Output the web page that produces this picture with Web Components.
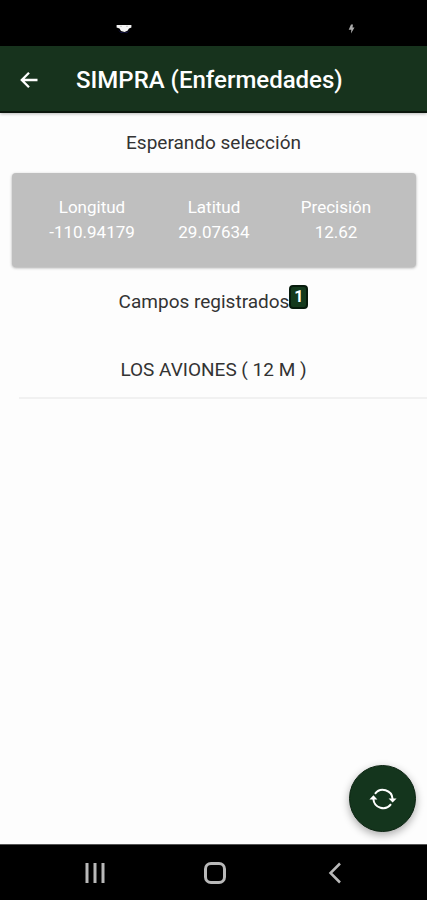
<!DOCTYPE html>
<html lang="es">
<head>
<meta charset="utf-8">
<meta name="viewport" content="width=device-width, initial-scale=1">
<title>SIMPRA (Enfermedades)</title>
<style>
html, body { margin: 0; height: 100%; }
body { font-family: Roboto, "Noto Sans", sans-serif; background: #fdfdfd; color: #333; }
</style>
</head>
<body>
<simpra-screen>
  <status-bar slot="status"></status-bar>
  <app-bar slot="header">SIMPRA (Enfermedades)</app-bar>
  <section-title>Esperando selección</section-title>
  <location-card>
    <location-value label="Longitud">-110.94179</location-value>
    <location-value label="Latitud">29.07634</location-value>
    <location-value label="Precisión">12.62</location-value>
  </location-card>
  <section-title count="1">Campos registrados</section-title>
  <field-list>
    <field-item>LOS AVIONES ( 12 M )</field-item>
  </field-list>
  <refresh-button slot="action"></refresh-button>
  <system-nav slot="nav"></system-nav>
</simpra-screen>

<script>
function define(name, markup, setup) {
  const template = document.createElement('template');
  template.innerHTML = markup;
  customElements.define(name, class extends HTMLElement {
    constructor() {
      super();
      this.attachShadow({ mode: 'open' }).append(template.content.cloneNode(true));
    }
    connectedCallback() {
      if (setup) setup(this, this.shadowRoot);
    }
  });
}

define('simpra-screen', `
<style>
:host { display: flex; flex-direction: column; min-height: 100vh; }
main { flex: 1; display: flex; flex-direction: column; position: relative; }
.action { position: absolute; right: 11px; bottom: 12px; }
</style>
<slot name="status"></slot>
<slot name="header"></slot>
<main><slot></slot><div class="action"><slot name="action"></slot></div></main>
<slot name="nav"></slot>`);

define('status-bar', `
<style>
:host { display: flex; justify-content: space-between; align-items: center; height: 46px; padding: 12px 72px 0 116px; box-sizing: border-box; background: #000; }
svg { display: block; }
</style>
<svg width="16" height="10" viewBox="0 0 16 10" aria-hidden="true"><path d="M2 6q6 5 12 0l-3 3H5z" fill="#17174a"/><path d="M.6 1h14.800v2.400l-2.400 1-1.500 2.300-3 1.200-3.500-1-1.500-2.400-2.900-1z" fill="#f4f4f4"/><path d="M4 2.300h2M10 2.300h2" stroke="#bbb" stroke-width=".8"/></svg>
<svg width="7" height="10" viewBox="0 0 7 10" aria-hidden="true"><path d="M3 .5h2l-.5 3H6.500L3 9.500l.3-3.700H.7z" fill="#aaa"/></svg>`);

define('app-bar', `
<style>
:host { display: flex; align-items: center; gap: 28px; height: 67px; padding: 2px 9px 0; box-sizing: border-box; background: #17331d; border-bottom: 2px solid #0b170d; box-shadow: 0 1px 3px #0004; color: #fff; }
button { display: grid; place-items: center; width: 39px; height: 40px; padding: 0; border: 0; background: none; color: inherit; }
h1 { margin: 0; font-size: 24px; line-height: 32px; font-weight: 500; white-space: nowrap; }
</style>
<button type="button" aria-label="Regresar"><svg width="20" height="20" viewBox="0 0 20 20" fill="none" stroke="currentColor" stroke-width="2.300"><path d="M18.500 10H3M10 2.800 2.800 10l7.200 7.200"/></svg></button>
<h1><slot></slot></h1>`);

define('section-title', `
<style>
:host { display: flex; justify-content: center; padding: 18px 0; }
h2 { margin: 0; font-size: 19px; line-height: 24px; font-weight: 400; }
.count { align-self: flex-start; width: 19px; height: 24px; border-radius: 4px; box-sizing: border-box; border: 2px solid #071b0c; background: #143a1d; color: #fff; font-size: 16px; line-height: 20px; font-weight: 700; text-align: center; }
.count[hidden] { display: none; }
:host([count]) { padding: 18px 0 28px; }
:host([count]) h2 { padding-top: 5px; }
</style>
<h2><slot></slot></h2><span class="count" hidden></span>`, (host, root) => {
  const badge = root.querySelector('.count');
  badge.textContent = host.getAttribute('count') || '';
  badge.hidden = !host.hasAttribute('count');
});

define('location-card', `
<style>
:host { display: grid; grid-template-columns: repeat(3, 1fr); margin: 0 11px 0 12px; padding: 22px 19px; border-radius: 4px; background: #bfbfbf; box-shadow: 0 1px 3px #0005; color: #fff; }
</style>
<slot></slot>`);

define('location-value', `
<style>
:host { display: flex; flex-direction: column; align-items: center; font-size: 17px; line-height: 25px; }
</style>
<span class="label"></span><span><slot></slot></span>`, (host, root) => {
  root.querySelector('.label').textContent = host.getAttribute('label');
});

define('field-list', `
<style>:host { display: block; padding-left: 19px; }</style>
<div role="list"><slot></slot></div>`);

define('field-item', `
<style>
:host { display: block; border-bottom: 2px solid #f1f1f1; }
button { display: block; width: 100%; padding: 16px 19px 15px 0; border: 0; background: none; color: inherit; font: inherit; font-size: 19px; line-height: 24px; text-align: center; }
</style>
<div role="listitem"><button type="button"><slot></slot></button></div>`);

define('refresh-button', `
<style>
:host { display: block; }
button { display: grid; place-items: center; width: 67px; height: 67px; padding: 0; border: 1px solid #0c2412; border-radius: 50%; background: #14351d; color: #fff; box-shadow: 0 3px 9px #0005; }
</style>
<button type="button" aria-label="Actualizar"><svg width="28" height="24" viewBox="0 0 28 24"><path d="M6 6.800A9.800 9.800 0 0 1 23.600 12M22 17.200A9.800 9.800 0 0 1 4.400 12" fill="none" stroke="currentColor" stroke-width="2"/><path d="M19.600 11.400h8L23.600 15.600zM.4 12.600h8L4.400 8.200z" fill="currentColor"/></svg></button>`);

define('system-nav', `
<style>
:host { display: block; background: #000; border-top: 1px solid #555; }
nav { display: grid; grid-template-columns: repeat(3, 1fr); padding: 0 32px 0 35px; }
button { display: grid; place-items: center; height: 55px; padding: 0; border: 0; background: none; color: #b9b9b9; }
svg { fill: none; stroke: currentColor; stroke-width: 3; }
</style>
<nav aria-label="Sistema">
<button type="button" aria-label="Recientes"><svg width="24" height="24" viewBox="0 0 24 24"><path d="M4 2v20M12 2v20M20 2v20"/></svg></button>
<button type="button" aria-label="Inicio"><svg width="24" height="24" viewBox="0 0 24 24"><rect x="2.500" y="2.500" width="19" height="19" rx="5.500"/></svg></button>
<button type="button" aria-label="Atrás"><svg width="24" height="24" viewBox="0 0 24 24"><path d="M17 2.500 7.500 12l9.500 9.500" stroke-width="2.500"/></svg></button>
</nav>`);
</script>
</body>
</html>
